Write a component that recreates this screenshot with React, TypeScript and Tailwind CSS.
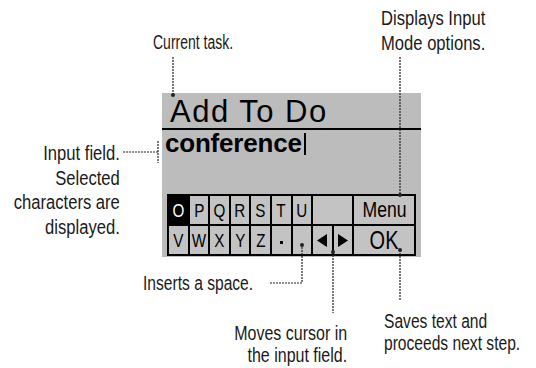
import React from "react";

const sans = "font-['Liberation_Sans',Arial,sans-serif]";

function Cell({ children, className = "" }: { children?: React.ReactNode; className?: string }) {
  return (
    <div className={`flex items-center justify-center bg-[#c3c3c3] text-black leading-none ${className}`}>
      {children}
    </div>
  );
}

// narrow glyphs: the reference uses a condensed face, squeezed here
function Key({ children, className = "" }: { children: React.ReactNode; className?: string }) {
  return <span className={`inline-block scale-x-[0.8] ${className}`}>{children}</span>;
}

function Leaders() {
  const line = { stroke: "#222", strokeWidth: 1.2, strokeDasharray: "2 1", fill: "none" };
  return (
    <svg className="absolute left-0 top-0 pointer-events-none" width="536" height="368" viewBox="0 0 536 368">
      <line x1="173" y1="57" x2="173" y2="95" {...line} />
      <circle cx="173" cy="95" r="2" fill="#222" />
      <line x1="400" y1="57" x2="400" y2="195" {...line} />
      <circle cx="400" cy="195" r="2" fill="#222" />
      <line x1="123" y1="152" x2="158" y2="152" {...line} />
      <line x1="158" y1="141" x2="158" y2="163" {...line} />
      <polyline points="270,283 302,283 302,245" {...line} />
      <circle cx="302" cy="245" r="2" fill="#222" />
      <line x1="333" y1="252" x2="333" y2="313" {...line} />
      <circle cx="333" cy="252" r="2" fill="#222" />
      <line x1="400" y1="250" x2="400" y2="300" {...line} />
      <circle cx="400" cy="250" r="2" fill="#222" />
    </svg>
  );
}

export default function App() {
  const letters1 = ["P", "Q", "R", "S", "T", "U"];
  const letters2 = ["V", "W", "X", "Y", "Z"];

  return (
    <div className={`relative w-[536px] h-[368px] overflow-hidden bg-white text-[#1a1a1a] ${sans}`}>
      {/* phone screen */}
      <div className="ml-[162px] pt-[93px]">
        <div className="w-[259px] h-[164px] bg-[#bcbcbc]">
          <div className="h-[37px] pt-[3px] pl-[8px] border-b-2 border-black text-[31px] leading-[31px] tracking-[1.5px] text-black">
            Add To Do
          </div>
          <div className="flex items-center h-[26px] pl-[3px] text-[26px] leading-[26px] font-bold text-black tracking-[-0.2px]">
            conference
            <span className="inline-block w-[2px] h-[22px] bg-black ml-[2px] mt-[2px]" />
          </div>
          <div className="ml-[5px] mt-[38px] grid grid-cols-12 grid-rows-2 gap-[2px] bg-black p-[2px] w-[249px] h-[62px]">
            <Cell className="bg-black text-white text-[19px]">
              <Key>O</Key>
            </Cell>
            {letters1.map((l) => (
              <Cell key={l} className="text-[19px]">
                <Key>{l}</Key>
              </Cell>
            ))}
            <Cell className="col-span-2" />
            <Cell className="col-span-3 text-[22px]">
              <Key>Menu</Key>
            </Cell>
            {letters2.map((l) => (
              <Cell key={l} className="text-[19px]">
                <Key>{l}</Key>
              </Cell>
            ))}
            <Cell className="items-end pb-[10px]">
              <span className="block w-[3px] h-[3px] bg-black" />
            </Cell>
            <Cell />
            <Cell>
              <svg width="10" height="13" viewBox="0 0 10 13">
                <polygon points="10,0 10,13 0,6.5" fill="#000" />
              </svg>
            </Cell>
            <Cell>
              <svg width="10" height="13" viewBox="0 0 10 13">
                <polygon points="0,0 0,13 10,6.5" fill="#000" />
              </svg>
            </Cell>
            <Cell className="col-span-3 text-[25px]">
              <Key>OK</Key>
            </Cell>
          </div>
        </div>
      </div>

      {/* callouts */}
      <div className="absolute left-[153px] top-[30px] whitespace-nowrap origin-left scale-x-[0.7] text-[20px] leading-[24px]">
        Current task.
      </div>
      <div className="absolute left-[381px] top-[6px] whitespace-nowrap origin-left scale-x-[0.83] text-[20px] leading-[25px]">
        Displays Input
        <br />
        Mode options.
      </div>
      <div className="absolute right-[416px] top-[141px] whitespace-nowrap text-right origin-right scale-x-[0.83] text-[20px] leading-[24.5px]">
        Input field.
        <br />
        Selected
        <br />
        characters are
        <br />
        displayed.
      </div>
      <div className="absolute left-[143px] top-[271px] whitespace-nowrap origin-left scale-x-[0.78] text-[20px] leading-[24px]">
        Inserts a space.
      </div>
      <div className="absolute right-[189px] top-[322px] whitespace-nowrap text-right origin-right scale-x-[0.8] text-[20px] leading-[22px]">
        Moves cursor in
        <br />
        the input field.
      </div>
      <div className="absolute left-[384px] top-[310px] whitespace-nowrap origin-left scale-x-[0.78] text-[20px] leading-[22px]">
        Saves text and
        <br />
        proceeds next step.
      </div>

      <Leaders />
    </div>
  );
}
